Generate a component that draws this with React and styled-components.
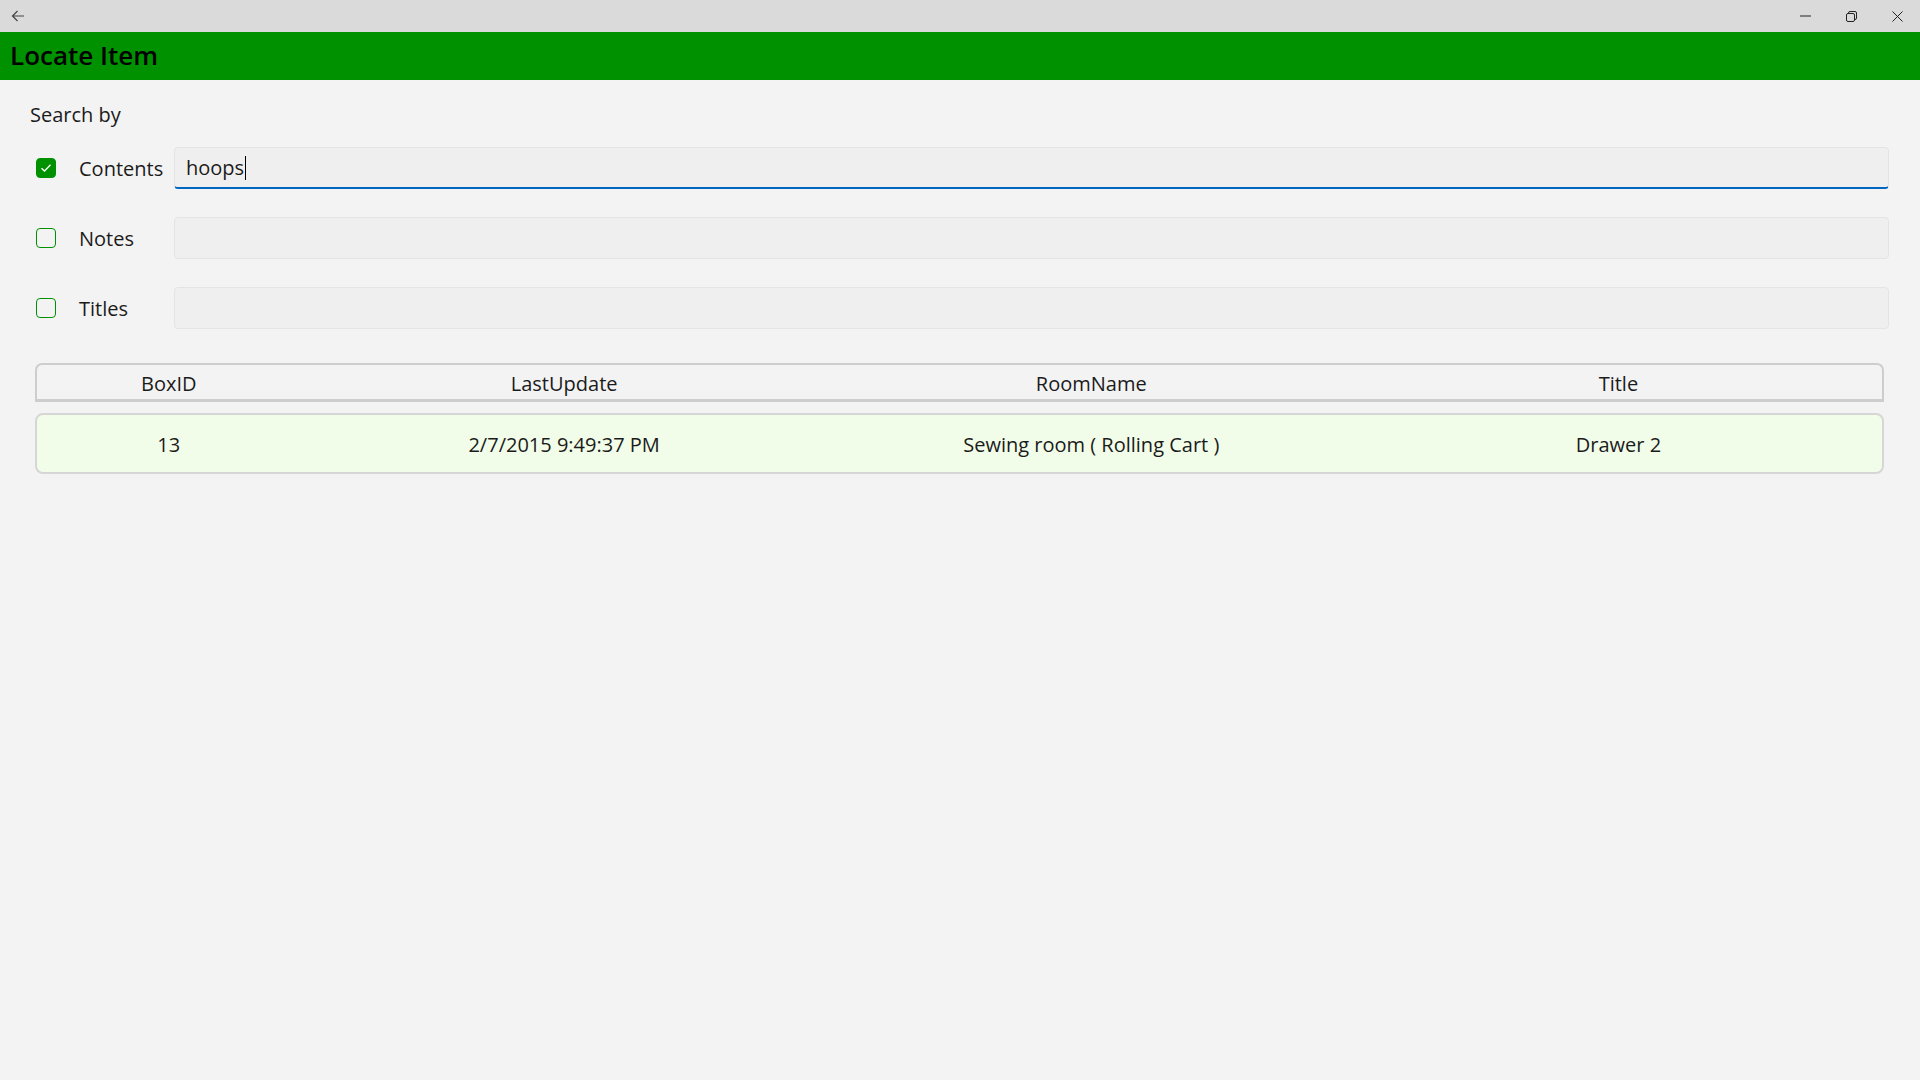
import React, { useState } from 'react'
import styled, { createGlobalStyle } from 'styled-components'

const GlobalStyle = createGlobalStyle`
  html, body {
    margin: 0;
    padding: 0;
    background: #f3f3f3;
    font-family: 'Open Sans', 'Noto Sans', sans-serif;
    color: #1b1b1b;
  }
  * { box-sizing: border-box; }
`

const Window = styled.div`
  width: 1920px;
  height: 1080px;
  display: flex;
  flex-direction: column;
  background: #f3f3f3;
  overflow: hidden;
`

const TitleBar = styled.div`
  height: 32px;
  background: #dadada;
  display: flex;
  align-items: center;
  justify-content: space-between;
`

const BarButton = styled.button`
  width: ${p => p.$w || 46}px;
  height: 32px;
  border: none;
  background: none;
  padding: 0;
  display: flex;
  align-items: center;
  justify-content: center;
  color: #333;
  svg { display: block; }
`

const Controls = styled.div`
  display: flex;
`

const Header = styled.header`
  height: 48px;
  background: #009100;
  display: flex;
  align-items: center;
  padding: 0 0 3px 10px;
`

const HeaderTitle = styled.h1`
  margin: 0;
  font-size: 26px;
  font-weight: 600;
  color: #000;
`

const Content = styled.main`
  padding: 21px 31px 0 30px;
`

const Caption = styled.div`
  font-size: 20px;
  line-height: 28px;
  margin-bottom: 18px;
`

const Rows = styled.div`
  display: flex;
  flex-direction: column;
  gap: 28px;
`

const Row = styled.div`
  display: flex;
  align-items: center;
  height: 42px;
`

const Check = styled.button`
  width: 20px;
  height: 20px;
  margin: 0 23px 0 6px;
  padding: 0;
  border-radius: 4px;
  border: 1px solid #009100;
  background: ${p => (p.$on ? '#009100' : '#f3f3f3')};
  display: flex;
  align-items: center;
  justify-content: center;
  cursor: pointer;
  svg { display: block; }
`

const Label = styled.span`
  width: 95px;
  font-size: 20px;
`

const Field = styled.div`
  flex: 1;
  height: 42px;
  background: #efefef;
  border: 1px solid #e4e4e4;
  border-bottom: ${p => (p.$focus ? '2px solid #0067c0' : '1px solid #e4e4e4')};
  border-radius: 4px;
  display: flex;
  align-items: center;
  padding: 0 11px;
  font-size: 20px;
`

const Caret = styled.span`
  display: inline-block;
  width: 1px;
  height: 24px;
  background: #000;
  margin-left: 1px;
`

const Table = styled.div`
  margin: 34px 5px 0 5px;
`

const Grid = styled.div`
  display: grid;
  grid-template-columns: 1fr 2fr 2fr 2fr;
  align-items: center;
  font-size: 20px;
  text-align: center;
`

const HeadRow = styled(Grid)`
  height: 39px;
  border: 2px solid #cdcdcd;
  border-bottom-width: 3px;
  border-radius: 7px 7px 0 0;
  padding-top: 2px;
`

const DataRow = styled(Grid)`
  margin-top: 11px;
  height: 61px;
  background: #f2fde9;
  border: 2px solid #d6d6d6;
  border-radius: 8px;
  padding-top: 1px;
`

const BackIcon = () => (
  <svg width="14" height="12" viewBox="0 0 14 12" fill="none" stroke="#444" strokeWidth="1.2">
    <path d="M13 6H1.5M6.5 1L1.5 6l5 5" />
  </svg>
)

const MinIcon = () => (
  <svg width="11" height="2" viewBox="0 0 11 2"><path d="M0 1h11" stroke="#222" strokeWidth="1" /></svg>
)

const RestoreIcon = () => (
  <svg width="11" height="11" viewBox="0 0 11 11" fill="none" stroke="#222" strokeWidth="1">
    <rect x="0.5" y="2.5" width="8" height="8" rx="1.5" />
    <path d="M2.5 2.5V2a1.5 1.5 0 0 1 1.5-1.5h5A1.5 1.5 0 0 1 10.5 2v5A1.5 1.5 0 0 1 9 8.5h-0.5" />
  </svg>
)

const CloseIcon = () => (
  <svg width="11" height="11" viewBox="0 0 11 11" stroke="#222" strokeWidth="1">
    <path d="M0.5 0.5l10 10M10.5 0.5l-10 10" />
  </svg>
)

const Tick = () => (
  <svg width="12" height="10" viewBox="0 0 12 10" fill="none" stroke="#fff" strokeWidth="1.3">
    <path d="M1.5 5.2L4.5 8l6-6.2" />
  </svg>
)

const filters = [
  { key: 'contents', label: 'Contents' },
  { key: 'notes', label: 'Notes' },
  { key: 'titles', label: 'Titles' },
]

const results = [
  { id: 13, updated: '2/7/2015 9:49:37 PM', room: 'Sewing room ( Rolling Cart )', title: 'Drawer 2' },
]

const App = () => {
  const [checked, setChecked] = useState({ contents: true, notes: false, titles: false })

  const toggle = key => setChecked(c => ({ ...c, [key]: !c[key] }))

  return (
    <Window>
      <GlobalStyle />
      <TitleBar>
        <BarButton $w={36}><BackIcon /></BarButton>
        <Controls>
          <BarButton><MinIcon /></BarButton>
          <BarButton><RestoreIcon /></BarButton>
          <BarButton><CloseIcon /></BarButton>
        </Controls>
      </TitleBar>
      <Header>
        <HeaderTitle>Locate Item</HeaderTitle>
      </Header>
      <Content>
        <Caption>Search by</Caption>
        <Rows>
          {filters.map(f => (
            <Row key={f.key}>
              <Check $on={checked[f.key]} onClick={() => toggle(f.key)}>
                {checked[f.key] && <Tick />}
              </Check>
              <Label>{f.label}</Label>
              <Field $focus={f.key === 'contents'}>
                {f.key === 'contents' && (<>hoops<Caret /></>)}
              </Field>
            </Row>
          ))}
        </Rows>
        <Table>
          <HeadRow>
            <span>BoxID</span>
            <span>LastUpdate</span>
            <span>RoomName</span>
            <span>Title</span>
          </HeadRow>
          {results.map(r => (
            <DataRow key={r.id}>
              <span>{r.id}</span>
              <span>{r.updated}</span>
              <span>{r.room}</span>
              <span>{r.title}</span>
            </DataRow>
          ))}
        </Table>
      </Content>
    </Window>
  )
}

export default App
